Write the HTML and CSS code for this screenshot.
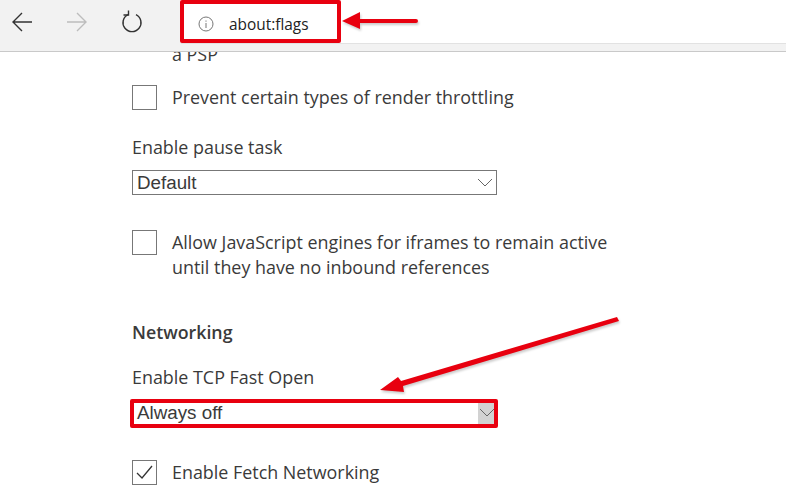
FILE: index.html
```html
<!DOCTYPE html>
<html lang="en">
<head>
    <meta charset="UTF-8">
    <meta name="viewport" content="width=device-width, initial-scale=1.0">
    <title>about:flags</title>
    <link rel="stylesheet" href="styles.css">
</head>
<body>

<header class="toolbar">
    <div class="nav-buttons">
        <svg class="nav-icon" width="24" height="24" viewBox="0 0 24 24" fill="none" stroke="#333" stroke-width="1.4">
            <path d="M22 12H3M12 3l-9 9 9 9"/>
        </svg>
        <svg class="nav-icon" width="24" height="24" viewBox="0 0 24 24" fill="none" stroke="#bdbdbd" stroke-width="1.4">
            <path d="M2 12h19M12 3l9 9-9 9"/>
        </svg>
        <svg class="nav-icon" width="24" height="24" viewBox="0 0 24 24" fill="none" stroke="#333" stroke-width="1.4">
            <path d="M8 4.600a9 9 0 1 0 8 0"/>
            <path d="M8.500 .5V5H3.500"/>
        </svg>
    </div>
    <div class="address-bar">
        <svg class="info-icon" width="16" height="16" viewBox="0 0 16 16" fill="none" stroke="#777" stroke-width="1">
            <circle cx="8" cy="8" r="7"/>
            <path d="M8 7v5M8 4.500v1.200"/>
        </svg>
        <span class="address-text">about:flags</span>
    </div>
</header>

<main class="flags">
    <p class="clipped-text">a PSP</p>

    <div class="check-row row-throttle">
        <span class="checkbox"></span>
        <span>Prevent certain types of render throttling</span>
    </div>

    <div class="field field-pause">
        <div class="field-label">Enable pause task</div>
        <div class="dropdown">
            <span>Default</span>
            <span class="dropdown-arrow">
                <svg width="16" height="9" viewBox="0 0 16 9" fill="none" stroke="#666" stroke-width="1"><path d="M1 1l7 7 7-7"/></svg>
            </span>
        </div>
    </div>

    <div class="check-row row-js">
        <span class="checkbox"></span>
        <span>Allow JavaScript engines for iframes to remain active<br>until they have no inbound references</span>
    </div>

    <h2 class="section-title">Networking</h2>

    <div class="field field-tcp">
        <div class="field-label">Enable TCP Fast Open</div>
        <div class="dropdown dropdown-active">
            <span>Always off</span>
            <span class="dropdown-arrow">
                <svg width="16" height="9" viewBox="0 0 16 9" fill="none" stroke="#666" stroke-width="1"><path d="M1 1l7 7 7-7"/></svg>
            </span>
        </div>
    </div>

    <div class="check-row row-fetch">
        <span class="checkbox">
            <svg width="23" height="23" viewBox="0 0 23 23" fill="none" stroke="#333" stroke-width="1.3"><path d="M4 12l5 5L19 5"/></svg>
        </span>
        <span>Enable Fetch Networking</span>
    </div>
</main>

<!-- red annotations drawn on top of the screenshot -->
<div class="callout callout-address"></div>
<div class="callout callout-select"></div>
<svg class="arrows" width="786" height="494" viewBox="0 0 786 494">
    <path d="M342 21l18-9v7h56a2 2 0 0 1 0 4h-56v6z" fill="#e8000f"/>
    <path d="M380 390l18-13 3 4 216-64 2 4-216 65 1 6z" fill="#e8000f"/>
</svg>

</body>
</html>
```

FILE: styles.css
```css
html, body {
    margin: 0;
    padding: 0;
    height: 100%;
    overflow: hidden;
}

body {
    position: relative;
    font-family: "Open Sans", "Noto Sans", sans-serif;
    font-size: 17.9px;
    color: #3a3a3a;
    background-color: white;
}

.toolbar {
    position: relative;
    z-index: 1;
    display: flex;
    height: 44px;
    padding-bottom: 7px;
    background-color: #f2f2f2;
    border-bottom: 1px solid #c9c9c9;
}

.nav-buttons {
    display: flex;
    align-items: center;
    gap: 31px;
    width: 181px;
    padding-left: 10px;
    box-sizing: border-box;
}

.address-bar {
    flex: 1;
    display: flex;
    align-items: center;
    background-color: white;
    border-bottom: 1px solid #e2e2e2;
    padding: 5px 0 0 17px;
    box-sizing: border-box;
}

.address-text {
    margin-left: 15px;
    font-size: 15.4px;
    color: #222;
}

.flags {
    padding-left: 132px;
}

.clipped-text {
    margin: -10px 0 0 40px;
    line-height: 25px;
}

.check-row {
    display: flex;
    gap: 15px;
    line-height: 25px;
}

.checkbox {
    flex: none;
    width: 23px;
    height: 23px;
    border: 1px solid #777;
}

.checkbox svg {
    display: block;
}

.row-throttle {
    margin-top: 18px;
}

.field-pause {
    margin-top: 25px;
}

.field-label {
    line-height: 25px;
}

.dropdown {
    display: flex;
    justify-content: space-between;
    align-items: center;
    width: 365px;
    height: 25px;
    margin-top: 10px;
    padding-left: 4px;
    box-sizing: border-box;
    border: 1px solid #777;
    font-family: "Liberation Sans", Arial, sans-serif;
    font-size: 18.8px;
}

.dropdown-arrow {
    display: flex;
    align-items: center;
    justify-content: center;
    width: 18px;
    height: 100%;
    margin-right: 2px;
}

.dropdown-active {
    border-color: transparent;
}

.dropdown-active .dropdown-arrow {
    background-color: #d2d2d2;
    margin-right: 0;
}

.row-js {
    margin-top: 35px;
}

.section-title {
    margin: 40px 0 0;
    font-size: 17.8px;
    font-weight: 600;
    line-height: 25px;
}

.field-tcp {
    margin-top: 20px;
}

.row-fetch {
    margin-top: 35px;
}

.callout {
    position: absolute;
    z-index: 2;
    box-sizing: border-box;
    border: 4px solid #e8000f;
    border-radius: 2px;
}

.callout-address {
    left: 180px;
    top: 0;
    width: 161px;
    height: 43px;
}

.callout-select {
    left: 130px;
    top: 399px;
    width: 368px;
    height: 29px;
}

.arrows {
    position: absolute;
    z-index: 2;
    left: 0;
    top: 0;
    filter: drop-shadow(1px 2px 1px rgba(0, 0, 0, 0.2));
}
```
